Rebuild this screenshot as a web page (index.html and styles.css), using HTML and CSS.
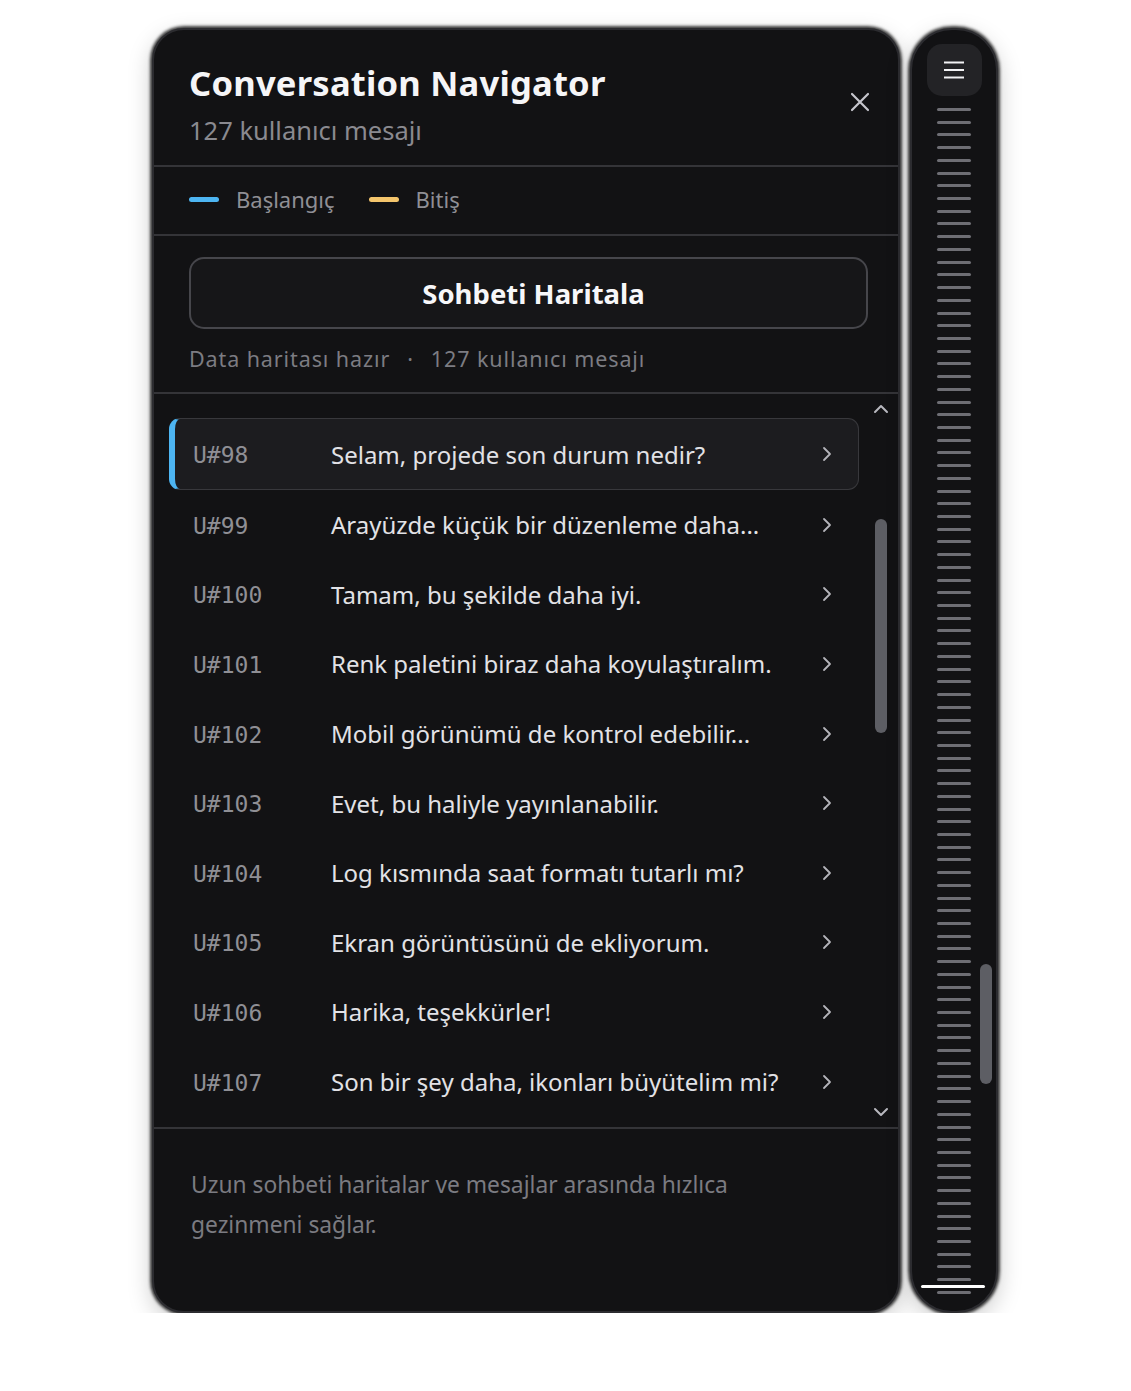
FILE: index.html
```html
<!DOCTYPE html>
<html lang="tr">
<head>
<meta charset="utf-8">
<title>Conversation Navigator</title>
<link rel="stylesheet" href="styles.css">
</head>
<body>
<div class="stage">
  <section class="panel">
    <header class="head">
      <div class="head-text">
        <h1 class="title">Conversation Navigator</h1>
        <p class="subtitle">127 kullanıcı mesajı</p>
      </div>
      <button class="close" aria-label="Kapat">
        <svg width="20" height="20" viewBox="0 0 20 20"><path d="M2 2L18 18M18 2L2 18" stroke="#c6c6cd" stroke-width="2.2" stroke-linecap="round" fill="none"/></svg>
      </button>
    </header>

    <div class="legend">
      <span class="legend-item"><span class="swatch swatch-start"></span>Başlangıç</span>
      <span class="legend-item"><span class="swatch swatch-end"></span>Bitiş</span>
    </div>

    <div class="action">
      <button class="map-btn">Sohbeti Haritala</button>
      <p class="status">Data haritası hazır<span class="dot">·</span>127 kullanıcı mesajı</p>
    </div>

    <div class="list-wrap">
      <ul class="list">
        <li class="row active"><span class="rid">U#98</span><span class="rtext">Selam, projede son durum nedir?</span><svg class="chev" width="10" height="16" viewBox="0 0 10 16"><path d="M2 2l6 6-6 6" stroke="#b4b4ba" stroke-width="1.8" fill="none" stroke-linecap="round" stroke-linejoin="round"/></svg></li>
        <li class="row"><span class="rid">U#99</span><span class="rtext">Arayüzde küçük bir düzenleme daha...</span><svg class="chev" width="10" height="16" viewBox="0 0 10 16"><path d="M2 2l6 6-6 6" stroke="#b4b4ba" stroke-width="1.8" fill="none" stroke-linecap="round" stroke-linejoin="round"/></svg></li>
        <li class="row"><span class="rid">U#100</span><span class="rtext">Tamam, bu şekilde daha iyi.</span><svg class="chev" width="10" height="16" viewBox="0 0 10 16"><path d="M2 2l6 6-6 6" stroke="#b4b4ba" stroke-width="1.8" fill="none" stroke-linecap="round" stroke-linejoin="round"/></svg></li>
        <li class="row"><span class="rid">U#101</span><span class="rtext">Renk paletini biraz daha koyulaştıralım.</span><svg class="chev" width="10" height="16" viewBox="0 0 10 16"><path d="M2 2l6 6-6 6" stroke="#b4b4ba" stroke-width="1.8" fill="none" stroke-linecap="round" stroke-linejoin="round"/></svg></li>
        <li class="row"><span class="rid">U#102</span><span class="rtext">Mobil görünümü de kontrol edebilir...</span><svg class="chev" width="10" height="16" viewBox="0 0 10 16"><path d="M2 2l6 6-6 6" stroke="#b4b4ba" stroke-width="1.8" fill="none" stroke-linecap="round" stroke-linejoin="round"/></svg></li>
        <li class="row"><span class="rid">U#103</span><span class="rtext">Evet, bu haliyle yayınlanabilir.</span><svg class="chev" width="10" height="16" viewBox="0 0 10 16"><path d="M2 2l6 6-6 6" stroke="#b4b4ba" stroke-width="1.8" fill="none" stroke-linecap="round" stroke-linejoin="round"/></svg></li>
        <li class="row"><span class="rid">U#104</span><span class="rtext">Log kısmında saat formatı tutarlı mı?</span><svg class="chev" width="10" height="16" viewBox="0 0 10 16"><path d="M2 2l6 6-6 6" stroke="#b4b4ba" stroke-width="1.8" fill="none" stroke-linecap="round" stroke-linejoin="round"/></svg></li>
        <li class="row"><span class="rid">U#105</span><span class="rtext">Ekran görüntüsünü de ekliyorum.</span><svg class="chev" width="10" height="16" viewBox="0 0 10 16"><path d="M2 2l6 6-6 6" stroke="#b4b4ba" stroke-width="1.8" fill="none" stroke-linecap="round" stroke-linejoin="round"/></svg></li>
        <li class="row"><span class="rid">U#106</span><span class="rtext">Harika, teşekkürler!</span><svg class="chev" width="10" height="16" viewBox="0 0 10 16"><path d="M2 2l6 6-6 6" stroke="#b4b4ba" stroke-width="1.8" fill="none" stroke-linecap="round" stroke-linejoin="round"/></svg></li>
        <li class="row"><span class="rid">U#107</span><span class="rtext">Son bir şey daha, ikonları büyütelim mi?</span><svg class="chev" width="10" height="16" viewBox="0 0 10 16"><path d="M2 2l6 6-6 6" stroke="#b4b4ba" stroke-width="1.8" fill="none" stroke-linecap="round" stroke-linejoin="round"/></svg></li>
      </ul>
      <div class="scroller">
        <svg class="arrow" width="18" height="12" viewBox="0 0 18 12"><path d="M3 9l6-6 6 6" stroke="#b8b8bf" stroke-width="2" fill="none" stroke-linecap="round" stroke-linejoin="round"/></svg>
        <div class="track"><div class="thumb" style="top: 104px; height: 214px;"></div></div>
        <svg class="arrow" width="18" height="12" viewBox="0 0 18 12"><path d="M3 3l6 6 6-6" stroke="#b8b8bf" stroke-width="2" fill="none" stroke-linecap="round" stroke-linejoin="round"/></svg>
      </div>
    </div>

    <footer class="foot">
      <p>Uzun sohbeti haritalar ve mesajlar arasında hızlıca gezinmeni sağlar.</p>
    </footer>
  </section>

  <aside class="rail">
    <button class="menu" aria-label="Menü">
      <svg width="22" height="20" viewBox="0 0 22 20"><path d="M1 2.5h20M1 10h20M1 17.5h20" stroke="#f2f2f4" stroke-width="2" fill="none"/></svg>
    </button>
    <div class="ticks">
      <span></span><span></span><span></span><span></span><span></span><span></span><span></span><span></span><span></span><span></span>
      <span></span><span></span><span></span><span></span><span></span><span></span><span></span><span></span><span></span><span></span>
      <span></span><span></span><span></span><span></span><span></span><span></span><span></span><span></span><span></span><span></span>
      <span></span><span></span><span></span><span></span><span></span><span></span><span></span><span></span><span></span><span></span>
      <span></span><span></span><span></span><span></span><span></span><span></span><span></span><span></span><span></span><span></span>
      <span></span><span></span><span></span><span></span><span></span><span></span><span></span><span></span><span></span><span></span>
      <span></span><span></span><span></span><span></span><span></span><span></span><span></span><span></span><span></span><span></span>
      <span></span><span></span><span></span><span></span><span></span><span></span><span></span><span></span><span></span><span></span>
      <span></span><span></span><span></span><span></span><span></span><span></span><span></span><span></span><span></span><span></span>
      <span></span><span></span><span></span><span></span>
      <div class="current" style="bottom: 6px;"></div>
      <div class="rail-thumb" style="top: 856px; height: 120px;"></div>
    </div>
  </aside>
</div>
</body>
</html>
```

FILE: styles.css
```css
* { box-sizing: border-box; }

body {
  margin: 0;
  background: #ffffff;
  font-family: "Noto Sans", "Open Sans", "DejaVu Sans", sans-serif;
}

.stage {
  display: flex;
  gap: 10px;
  padding: 28px 0 0 152px;
  height: 1313px;
}

.panel {
  width: 748px;
  display: flex;
  flex-direction: column;
  background: #121214;
  border: 2px solid #2c2c30;
  border-radius: 32px;
  box-shadow: 0 0 3px 2px rgba(0, 0, 0, 0.75), 0 8px 24px rgba(0, 0, 0, 0.22);
  overflow: hidden;
}

.head {
  display: flex;
  align-items: center;
  justify-content: space-between;
  padding: 32px 28px 18px 35px;
  border-bottom: 2px solid #343438;
}

.title {
  margin: 0;
  font-size: 34.6px;
  line-height: 42px;
  font-weight: 700;
  color: #f5f5f7;
  letter-spacing: 0.2px;
}

.subtitle {
  margin: 9px 0 0;
  font-size: 25.5px;
  line-height: 34px;
  color: #8a8a90;
}

.close {
  background: none;
  border: 0;
  padding: 0;
  width: 20px;
  height: 20px;
  margin-bottom: 5px;
  display: flex;
}

.legend {
  display: flex;
  align-items: center;
  gap: 34px;
  height: 69px;
  padding: 0 35px 3px;
  border-bottom: 2px solid #343438;
}

.legend-item {
  display: flex;
  align-items: center;
  gap: 17px;
  font-size: 22px;
  color: #8f8f95;
}

.swatch {
  width: 30px;
  height: 5px;
  border-radius: 3px;
}
.swatch-start { background: #4db5f2; }
.swatch-end { background: #f4c56c; }

.action {
  padding: 21px 30px 16px 35px;
  border-bottom: 2px solid #343438;
}

.map-btn {
  display: block;
  width: 100%;
  height: 72px;
  padding: 0 0 0 10px;
  background: #161618;
  border: 2px solid #46464b;
  border-radius: 15px;
  color: #f7f7f9;
  font-family: inherit;
  font-size: 27.5px;
  font-weight: 700;
}

.status {
  margin: 13px 0 0;
  font-size: 21.5px;
  line-height: 34px;
  letter-spacing: 0.9px;
  color: #7c7c82;
}

.dot {
  margin: 0 17px;
}

.list-wrap {
  flex: 1;
  display: flex;
  padding-left: 15px;
  border-bottom: 2px solid #343438;
}

.list {
  list-style: none;
  margin: 0;
  padding: 24px 0 0;
  width: 690px;
}

.row {
  display: flex;
  align-items: center;
  height: 69.6px;
  padding: 0 26px 0 18px;
  border: 1px solid transparent;
  border-left: 6px solid transparent;
  border-radius: 11px;
}

.row.active {
  height: 72px;
  background: #1c1c1f;
  border-color: #38383c;
  border-left-color: #4db5f2;
}

.rid {
  width: 138px;
  flex-shrink: 0;
  font-family: "DejaVu Sans Mono", "Liberation Mono", monospace;
  font-size: 23px;
  line-height: 30px;
  padding-top: 2px;
  color: #8f8f95;
}

.rtext {
  flex: 1;
  font-size: 24px;
  color: #e2e2e6;
  white-space: nowrap;
}

.chev { flex-shrink: 0; }

.scroller {
  width: 32px;
  margin-left: 6px;
  display: flex;
  flex-direction: column;
  align-items: center;
  padding: 9px 0 9px;
}

.arrow { flex-shrink: 0; }

.track {
  flex: 1;
  width: 12px;
  position: relative;
}

.thumb {
  position: absolute;
  left: 0;
  width: 12px;
  border-radius: 6px;
  background: #5d5e64;
}

.foot {
  height: 182px;
  padding: 36px 36px 0 37px;
}

.foot p {
  margin: 0;
  font-size: 22.8px;
  line-height: 40px;
  color: #7b7b81;
  max-width: 580px;
}

.rail {
  width: 88px;
  display: flex;
  flex-direction: column;
  align-items: center;
  padding: 14px 0 17px;
  background: #121214;
  border: 2px solid #2c2c30;
  border-radius: 42px;
  box-shadow: 0 0 3px 2px rgba(0, 0, 0, 0.75), 0 8px 24px rgba(0, 0, 0, 0.22);
}

.menu {
  width: 55px;
  height: 52px;
  border: 0;
  border-radius: 15px;
  background: #232326;
  display: flex;
  align-items: center;
  justify-content: center;
  padding: 0;
}

.ticks {
  flex: 1;
  width: 100%;
  margin-top: 12px;
  display: flex;
  flex-direction: column;
  align-items: center;
  justify-content: space-between;
  position: relative;
}

.ticks span {
  width: 34px;
  height: 3px;
  border-radius: 2px;
  background: #6e6e74;
}

.current {
  position: absolute;
  left: 9px;
  width: 64px;
  height: 3px;
  border-radius: 2px;
  background: #ffffff;
}

.rail-thumb {
  position: absolute;
  right: 4px;
  width: 12px;
  border-radius: 6px;
  background: #5d5e64;
}
```
